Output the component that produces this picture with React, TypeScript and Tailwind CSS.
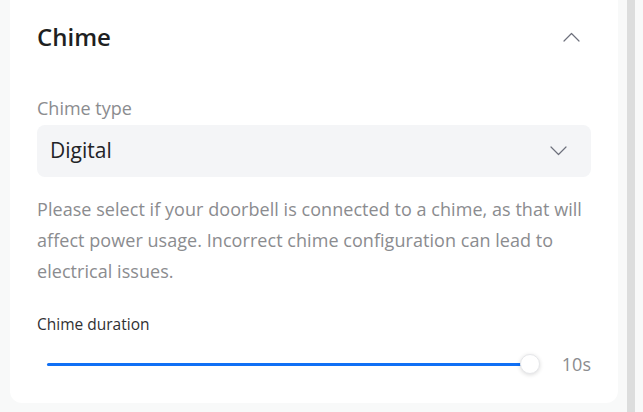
import React from 'react'

const Chevron: React.FC<{ up?: boolean; className?: string }> = ({ up, className }) => (
  <svg width="17" height="10" viewBox="0 0 17 10" fill="none" className={className}>
    <path
      d={up ? 'M1 9 L8.5 1.5 L16 9' : 'M1 1 L8.5 8.5 L16 1'}
      stroke="#6d707c"
      strokeWidth="1.2"
      strokeLinecap="round"
      strokeLinejoin="round"
    />
  </svg>
)

const App: React.FC = () => {
  const duration = 10
  const max = 10
  const pct = (duration / max) * 100

  return (
    <div className="flex h-[412px] w-[643px] overflow-hidden bg-[#f8f9f9] font-['Open_Sans',sans-serif]">
      <div className="pl-[10px] pb-[9px] flex items-end">
        <section className="w-[608px] rounded-b-[12px] bg-white px-[27px] pt-6 pb-[27px]">
          <header className="flex h-7 items-center justify-between">
            <h2 className="text-[24px] font-semibold leading-7 text-[#1e1f22]">Chime</h2>
            <Chevron up className="mr-[11px]" />
          </header>

          <div className="mt-[45px]">
            <label className="block text-[18px] leading-6 text-[#8b8c8f]">Chime type</label>
            <button className="mt-[5px] flex h-[52px] w-full items-center justify-between rounded-[8px] bg-[#f4f5f7] pl-[13px] pr-[24px]">
              <span className="text-[21px] text-[#222326]">Digital</span>
              <Chevron />
            </button>
          </div>

          <p className="mt-[17px] text-[18px] leading-[31px] tracking-[0.05px] text-[#8b8c8f]">
            Please select if your doorbell is connected to a chime, as that will affect power usage. Incorrect chime
            configuration can lead to electrical issues.
          </p>

          <div className="mt-[27px]">
            <span className="block text-[15.5px] leading-5 text-[#2f3033]">Chime duration</span>
            <div className="mt-[18px] flex h-6 items-center pl-[10px]">
              <div className="relative h-[3px] flex-1 rounded-full bg-[#e3e5e8]">
                <div className="h-full rounded-full bg-[#1070f5]" style={{ width: pct + '%' }} />
                <div
                  className="absolute top-1/2 h-5 w-5 -translate-x-1/2 -translate-y-1/2 rounded-full border border-[#e6e7ea] bg-white shadow-[0_1px_4px_rgba(0,0,0,0.15)]"
                  style={{ left: pct + '%' }}
                />
              </div>
              <span className="ml-[32px] text-[18px] leading-6 text-[#8b8c8f]">{duration}s</span>
            </div>
          </div>
        </section>
      </div>
      <div className="ml-[9px] h-full w-2 bg-[#dcdddd]" />
    </div>
  )
}

export default App
